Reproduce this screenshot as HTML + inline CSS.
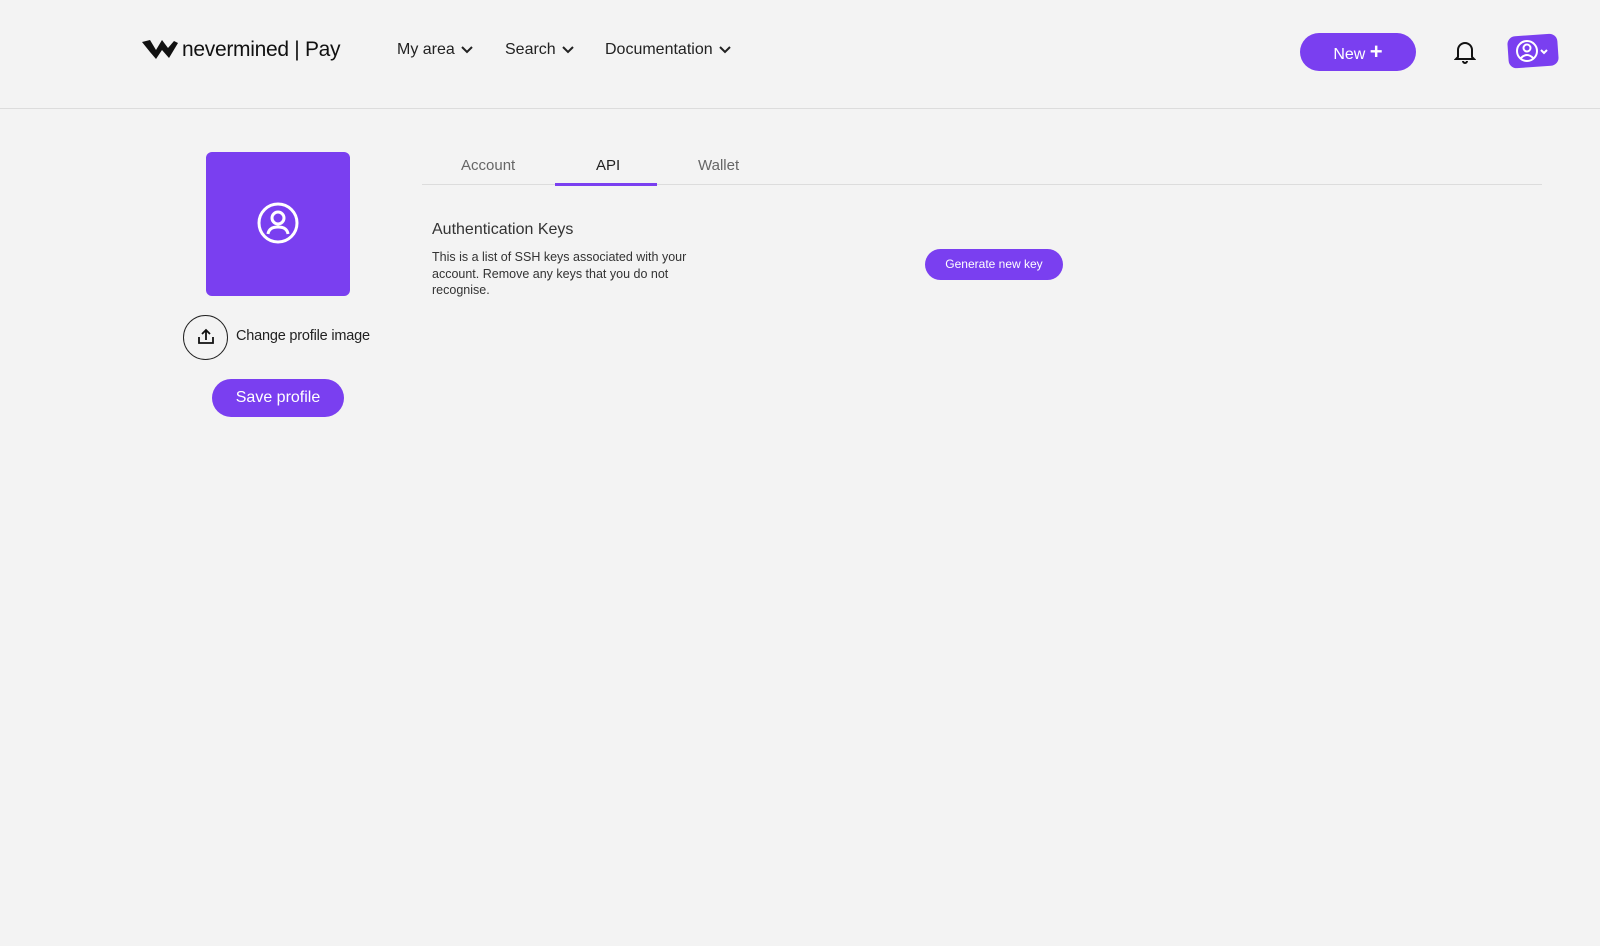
<!DOCTYPE html>
<html><head><meta charset="utf-8"><style>
*{box-sizing:border-box;margin:0;padding:0}
body{width:1600px;height:946px;background:#f3f3f3;font-family:"Liberation Sans",sans-serif;color:#222;position:relative;overflow:hidden}
.abs{position:absolute}
.hdr{left:0;top:0;width:1600px;height:109px;border-bottom:1px solid #dcdcdc}
.nav{font-size:16px;color:#222;top:41px}
.nav svg{margin-left:6px;vertical-align:middle}
.purple{background:#7a3ff0;color:#fff}
</style></head><body>
<div class="abs hdr"></div>
<svg class="abs" style="left:142px;top:40px" width="36" height="20" viewBox="0 0 36 20"><path d="M0 2 L8 0 L14 10 L20 0 L26 8 L32 1 L36 3 L27 18 L20 10 L14 19 L8 12 Z" fill="#111"/></svg>
<div class="abs" style="left:182px;top:38px;font-size:21px;color:#111;letter-spacing:-0.3px">nevermined <span style="font-weight:300">| Pay</span></div>
<div class="abs nav" style="left:397px">My area<svg width="12" height="8" viewBox="0 0 12 8"><path d="M1 1 L6 6 L11 1" fill="none" stroke="#222" stroke-width="2"/></svg></div>
<div class="abs nav" style="left:505px">Search<svg width="12" height="8" viewBox="0 0 12 8"><path d="M1 1 L6 6 L11 1" fill="none" stroke="#222" stroke-width="2"/></svg></div>
<div class="abs nav" style="left:605px">Documentation<svg width="12" height="8" viewBox="0 0 12 8"><path d="M1 1 L6 6 L11 1" fill="none" stroke="#222" stroke-width="2"/></svg></div>
<div class="abs purple" style="left:1300px;top:33px;width:116px;height:38px;border-radius:19px;text-align:center;line-height:38px;font-size:16px">New <b style="font-size:22px">+</b></div>
<svg class="abs" style="left:1454px;top:40px" width="22" height="24" viewBox="0 0 22 24"><path d="M4 17 L4 10 A7 7 0 0 1 18 10 L18 17 L20 19 L2 19 Z M9 21 A2 2 0 0 0 13 21" fill="none" stroke="#111" stroke-width="2"/></svg>
<div class="abs purple" style="left:1508px;top:35px;width:50px;height:32px;border-radius:8px;transform:rotate(-4deg)"></div>
<svg class="abs" style="left:1515px;top:39px" width="40" height="24" viewBox="0 0 40 24"><circle cx="12" cy="12" r="10" fill="none" stroke="#fff" stroke-width="2"/><circle cx="12" cy="9" r="3.5" fill="none" stroke="#fff" stroke-width="2"/><path d="M6 19 Q12 13 18 19" fill="none" stroke="#fff" stroke-width="2"/><path d="M26 11 L29 14 L32 11" fill="none" stroke="#fff" stroke-width="2"/></svg>

<div class="abs purple" style="left:206px;top:152px;width:144px;height:144px;border-radius:6px"></div>
<svg class="abs" style="left:256px;top:201px" width="44" height="44" viewBox="0 0 44 44"><circle cx="22" cy="22" r="19" fill="none" stroke="#fff" stroke-width="3"/><circle cx="22" cy="17" r="6" fill="none" stroke="#fff" stroke-width="3"/><path d="M12 33 Q13 26 22 26 Q31 26 32 33" fill="none" stroke="#fff" stroke-width="3"/></svg>
<div class="abs" style="left:183px;top:315px;width:45px;height:45px;border-radius:50%;border:1px solid #222"></div>
<svg class="abs" style="left:196px;top:327px" width="20" height="20" viewBox="0 0 20 20"><path d="M3 10 V16 H17 V10 M10 13 V3 M6 7 L10 3 L14 7" fill="none" stroke="#111" stroke-width="1.8"/></svg>
<div class="abs" style="left:236px;top:328px;font-size:14.5px;letter-spacing:-0.2px">Change profile image</div>
<div class="abs purple" style="left:212px;top:379px;width:132px;height:38px;border-radius:19px;text-align:center;line-height:38px;font-size:16px">Save profile</div>

<div class="abs" style="left:422px;top:184px;width:1120px;height:1px;background:#dcdcdc"></div>
<div class="abs" style="left:461px;top:157px;font-size:15px;color:#666">Account</div>
<div class="abs" style="left:596px;top:157px;font-size:15px;color:#222">API</div>
<div class="abs" style="left:555px;top:183px;width:102px;height:3px;background:#7a3ff0"></div>
<div class="abs" style="left:698px;top:157px;font-size:15px;color:#666">Wallet</div>
<div class="abs" style="left:432px;top:221px;font-size:16px;color:#333">Authentication Keys</div>
<div class="abs" style="left:432px;top:249px;width:290px;font-size:12.5px;line-height:16.5px;color:#333">This is a list of SSH keys associated with your account. Remove any keys that you do not recognise.</div>
<div class="abs purple" style="left:925px;top:249px;width:138px;height:31px;border-radius:16px;text-align:center;line-height:31px;font-size:12px">Generate new key</div>
</body></html>
